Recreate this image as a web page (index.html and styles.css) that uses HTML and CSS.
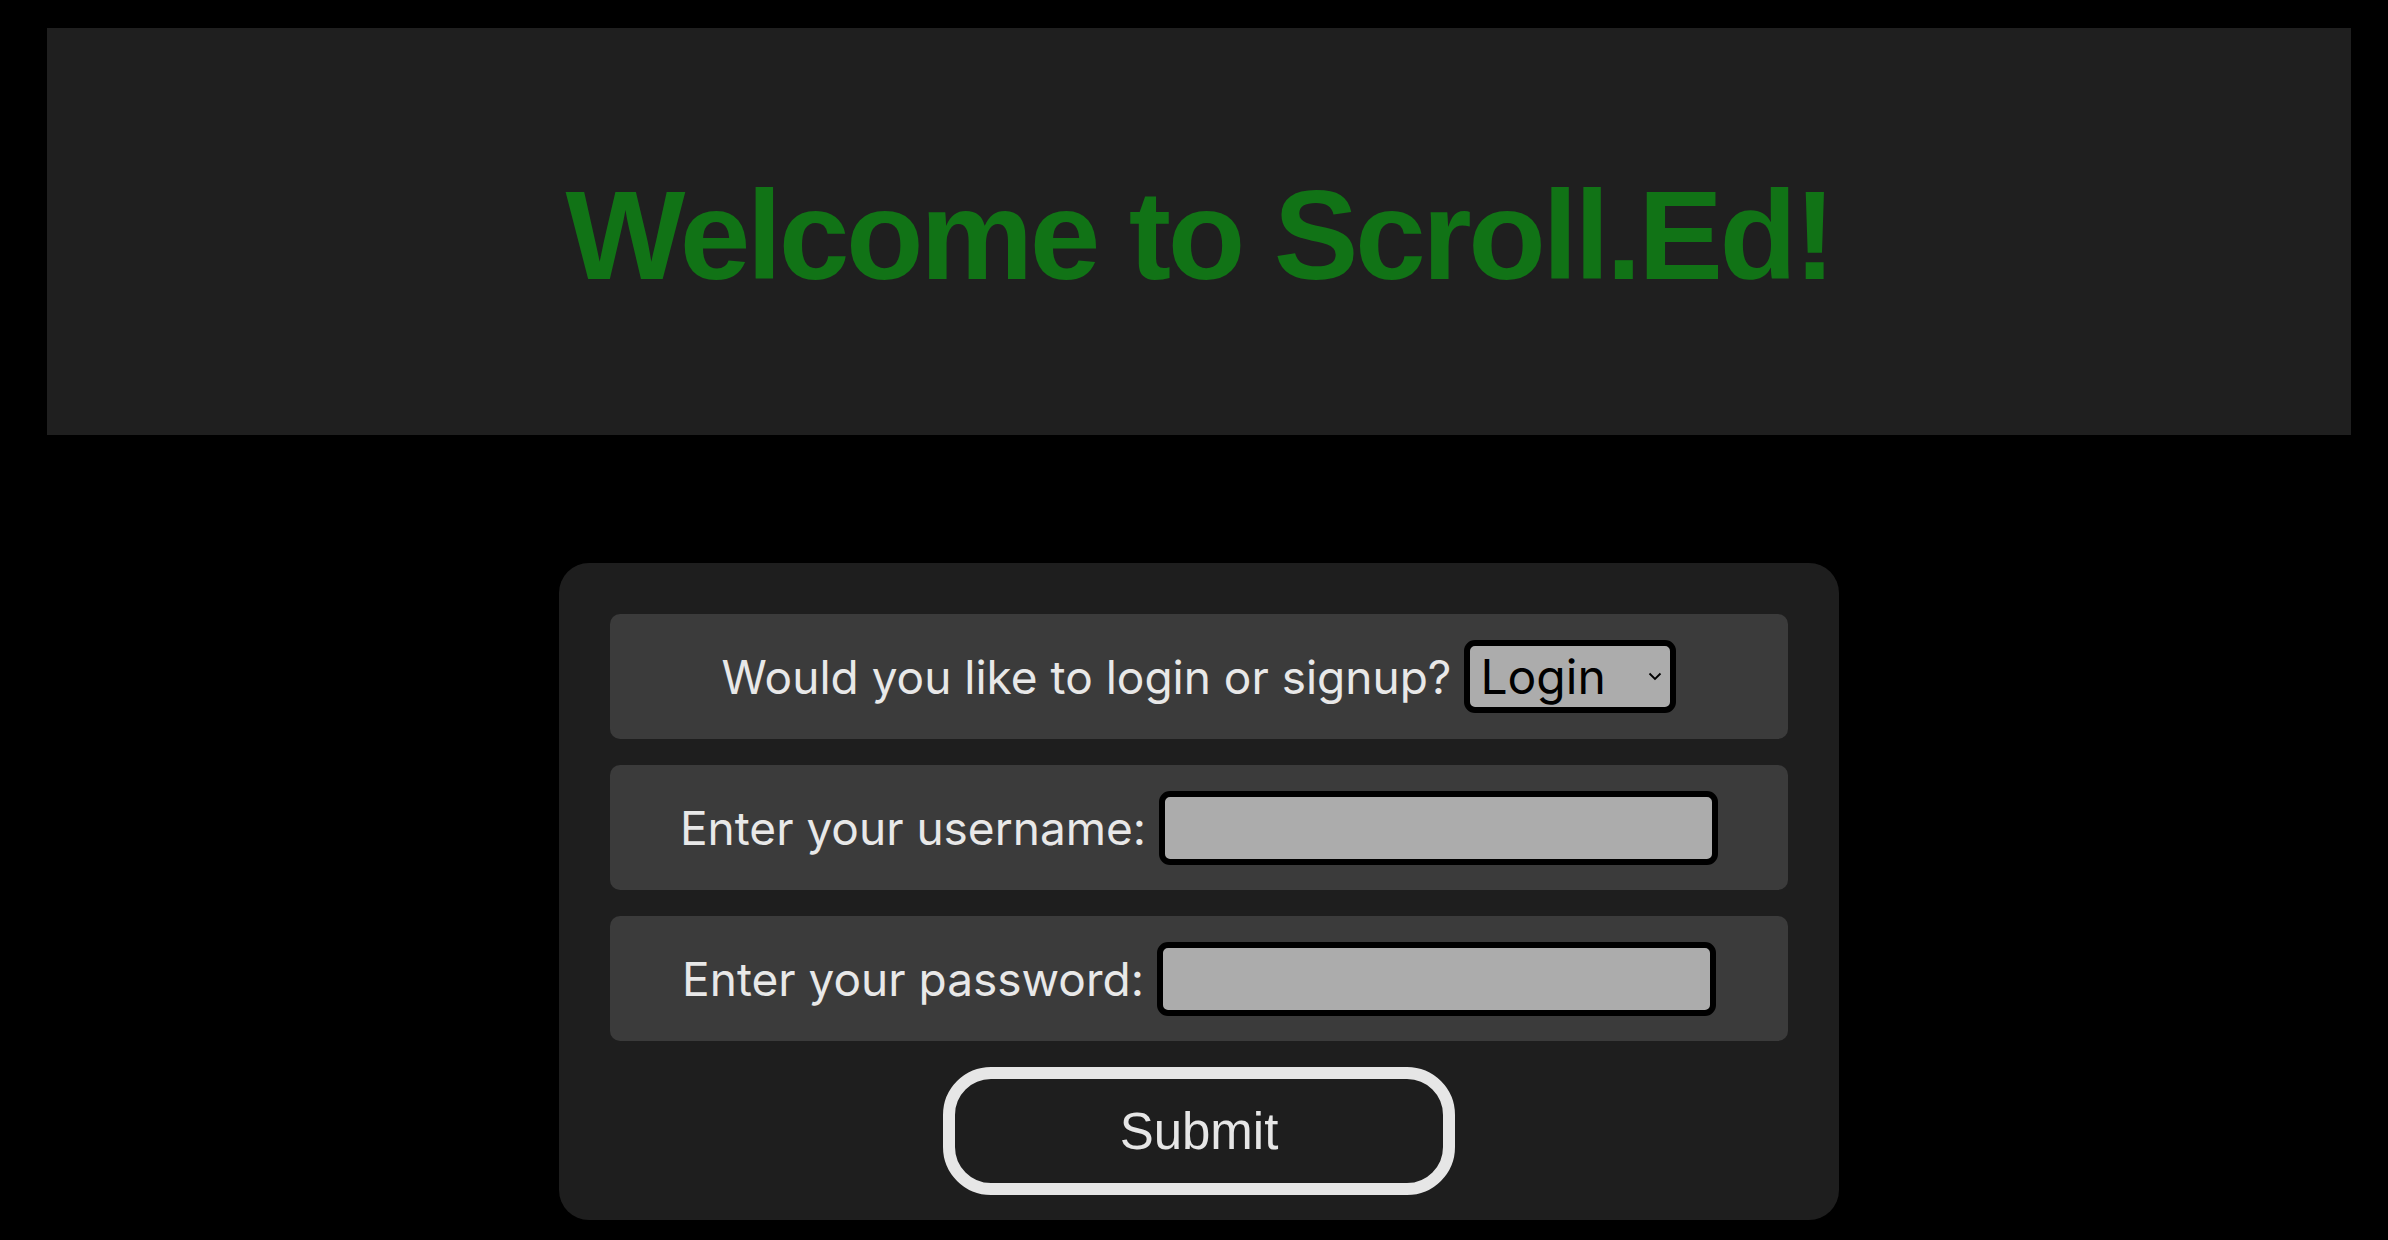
FILE: index.html
```html
<!DOCTYPE html>
<html lang="en">
<head>
<meta charset="utf-8">
<title>Scroll.Ed</title>
<link rel="stylesheet" href="styles.css">
</head>
<body>
<div class="page">
  <header class="banner">
    <h1 class="title">Welcome to Scroll.Ed!</h1>
  </header>
  <form class="card">
    <div class="row">
      <label class="label" for="mode">Would you like to login or signup?</label>
      <span class="select-wrap">
        <select id="mode" class="select">
          <option>Login</option>
          <option>Signup</option>
        </select>
        <svg class="chevron" width="14" height="9" viewBox="0 0 14 9"><path d="M1.5 1.5 L7 7 L12.5 1.5" fill="none" stroke="#000" stroke-width="1.8"/></svg>
      </span>
    </div>
    <div class="row">
      <label class="label" for="user">Enter your username:</label>
      <input id="user" class="field" type="text">
    </div>
    <div class="row">
      <label class="label" for="pass">Enter your password:</label>
      <input id="pass" class="field" type="password">
    </div>
    <button class="submit" type="button">Submit</button>
  </form>
</div>
</body>
</html>
```
FILE: styles.css
```css
html, body {
  margin: 0;
  background: #000;
}
body {
  font-family: Inter, "Noto Sans", sans-serif;
}
.page {
  padding: 28px 37px 0 47px;
}
.banner {
  background: #1f1f1f;
  height: 407px;
  box-sizing: border-box;
  padding-top: 6px;
  display: flex;
  align-items: center;
  justify-content: center;
}
.title {
  margin: 0;
  font-family: "Liberation Sans", Arial, sans-serif;
  font-weight: bold;
  font-size: 127px;
  color: #117316;
  letter-spacing: -3.4px;
}
.card {
  box-sizing: border-box;
  width: 1280px;
  margin: 128px auto 0;
  background: #1e1e1e;
  border-radius: 30px;
  padding: 51px 51px 25px;
  display: flex;
  flex-direction: column;
  gap: 26px;
}
.row {
  height: 125px;
  background: #3b3b3b;
  border-radius: 10px;
  display: flex;
  align-items: center;
  justify-content: center;
  gap: 13px;
}
.label {
  color: #e8e8e8;
  font-size: 46px;
}
.select-wrap {
  position: relative;
  display: inline-block;
}
.select {
  appearance: none;
  -webkit-appearance: none;
  box-sizing: border-box;
  width: 212px;
  height: 73px;
  border: 6px solid #000;
  border-radius: 11px;
  background: #acacac;
  color: #000;
  font-family: Inter, "Noto Sans", sans-serif;
  font-size: 48px;
  padding: 0 0 0 10px;
  margin: 0;
}
.chevron {
  position: absolute;
  right: 14px;
  top: 32px;
}
.field {
  box-sizing: border-box;
  width: 559px;
  height: 74px;
  border: 6px solid #000;
  border-radius: 11px;
  background: #acacac;
  margin: 0;
  padding: 0 10px;
  font-size: 40px;
}
.submit {
  align-self: center;
  box-sizing: border-box;
  width: 512px;
  height: 128px;
  border: 12px solid #e6e6e6;
  border-radius: 48px;
  background: #1e1e1e;
  color: #e6e6e6;
  font-family: "Liberation Sans", Arial, sans-serif;
  font-size: 51px;
  padding: 0;
}
```
